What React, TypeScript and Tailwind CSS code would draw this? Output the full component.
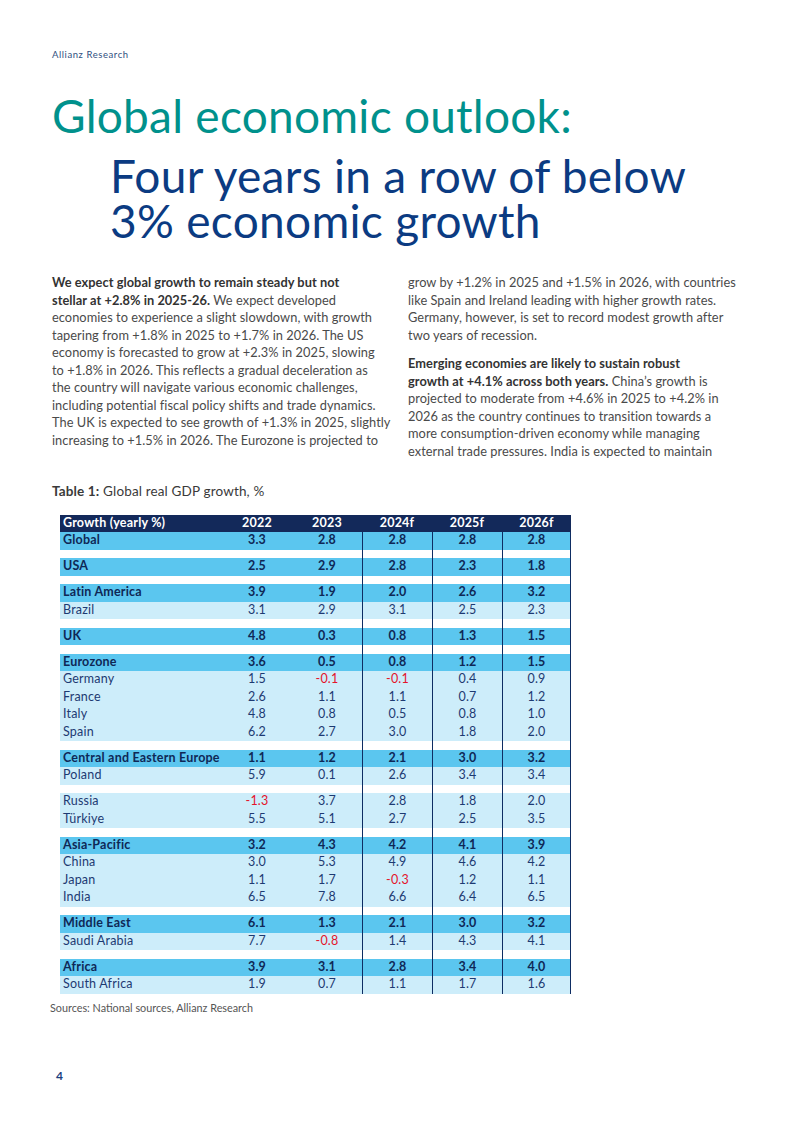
import React from "react";

type Row =
  | { kind: "gap" }
  | { kind: "bold" | "light"; label: string; v: string[] };

const rows: Row[] = [
  { kind: "bold", label: "Global", v: ["3.3", "2.8", "2.8", "2.8", "2.8"] },
  { kind: "gap" },
  { kind: "bold", label: "USA", v: ["2.5", "2.9", "2.8", "2.3", "1.8"] },
  { kind: "gap" },
  { kind: "bold", label: "Latin America", v: ["3.9", "1.9", "2.0", "2.6", "3.2"] },
  { kind: "light", label: "Brazil", v: ["3.1", "2.9", "3.1", "2.5", "2.3"] },
  { kind: "gap" },
  { kind: "bold", label: "UK", v: ["4.8", "0.3", "0.8", "1.3", "1.5"] },
  { kind: "gap" },
  { kind: "bold", label: "Eurozone", v: ["3.6", "0.5", "0.8", "1.2", "1.5"] },
  { kind: "light", label: "Germany", v: ["1.5", "-0.1", "-0.1", "0.4", "0.9"] },
  { kind: "light", label: "France", v: ["2.6", "1.1", "1.1", "0.7", "1.2"] },
  { kind: "light", label: "Italy", v: ["4.8", "0.8", "0.5", "0.8", "1.0"] },
  { kind: "light", label: "Spain", v: ["6.2", "2.7", "3.0", "1.8", "2.0"] },
  { kind: "gap" },
  { kind: "bold", label: "Central and Eastern Europe", v: ["1.1", "1.2", "2.1", "3.0", "3.2"] },
  { kind: "light", label: "Poland", v: ["5.9", "0.1", "2.6", "3.4", "3.4"] },
  { kind: "gap" },
  { kind: "light", label: "Russia", v: ["-1.3", "3.7", "2.8", "1.8", "2.0"] },
  { kind: "light", label: "Türkiye", v: ["5.5", "5.1", "2.7", "2.5", "3.5"] },
  { kind: "gap" },
  { kind: "bold", label: "Asia-Pacific", v: ["3.2", "4.3", "4.2", "4.1", "3.9"] },
  { kind: "light", label: "China", v: ["3.0", "5.3", "4.9", "4.6", "4.2"] },
  { kind: "light", label: "Japan", v: ["1.1", "1.7", "-0.3", "1.2", "1.1"] },
  { kind: "light", label: "India", v: ["6.5", "7.8", "6.6", "6.4", "6.5"] },
  { kind: "gap" },
  { kind: "bold", label: "Middle East", v: ["6.1", "1.3", "2.1", "3.0", "3.2"] },
  { kind: "light", label: "Saudi Arabia", v: ["7.7", "-0.8", "1.4", "4.3", "4.1"] },
  { kind: "gap" },
  { kind: "bold", label: "Africa", v: ["3.9", "3.1", "2.8", "3.4", "4.0"] },
  { kind: "light", label: "South Africa", v: ["1.9", "0.7", "1.1", "1.7", "1.6"] },
];

const numCell = [
  "w-[70px] text-center",
  "w-[70px] text-center",
  "w-[70px] text-center border-l-[1.5px] border-[#0e2d63]",
  "w-[70px] text-center border-l-[1.5px] border-[#0e2d63]",
  "w-[69px] text-center border-x-[1.5px] border-[#0e2d63]",
];

function TableRow({ row }: { row: Row }) {
  if (row.kind === "gap") {
    return (
      <div className="flex h-[8.5px]">
        <div className="w-[162px]" />
        {numCell.map((c, i) => (
          <div key={i} className={c} />
        ))}
      </div>
    );
  }
  const bold = row.kind === "bold";
  return (
    <div
      className={
        bold
          ? "flex h-[17.5px] items-center bg-[#5bc6ef] font-bold text-[#0f2856]"
          : "flex h-[17.5px] items-center bg-[#cdedfa] text-[#1d3a72]"
      }
    >
      <div className="w-[162px] pl-[3px] whitespace-nowrap">{row.label}</div>
      {row.v.map((v, i) => (
        <div
          key={i}
          className={`${numCell[i]} h-full flex items-center justify-center ${
            v.startsWith("-") ? "text-[#e4142b]" : ""
          }`}
        >
          {v}
        </div>
      ))}
    </div>
  );
}

export default function App() {
  return (
    <div className="w-[800px] h-[1130px] bg-white px-[52px] pt-[48px] font-['Lato',sans-serif] text-[#4a4a4a]">
      <div className="text-[9.5px] leading-[14px] tracking-[0.06em] text-[#2f4f80]">Allianz Research</div>

      <h1 className="mt-[31px] text-[46px] leading-[46px] tracking-[0.25px] text-[#00918c] whitespace-nowrap">
        Global economic outlook:
      </h1>
      <h2 className="mt-[14px] pl-[58px] text-[46px] leading-[45px] tracking-[0.3px] text-[#0b3b82] whitespace-nowrap">
        <div>Four years in a row of below</div>
        <div>3% economic growth</div>
      </h2>

      <div className="mt-[31px] grid grid-cols-2 gap-[16px] text-[12.8px] leading-[17.5px] tracking-[0.05px] whitespace-nowrap">
        <p>
          <b className="text-[#333]">We expect global growth to remain steady but not</b>
          <br />
          <b className="text-[#333]">stellar at +2.8% in 2025-26.</b> We expect developed
          <br />
          economies to experience a slight slowdown, with growth
          <br />
          tapering from +1.8% in 2025 to +1.7% in 2026. The US
          <br />
          economy is forecasted to grow at +2.3% in 2025, slowing
          <br />
          to +1.8% in 2026. This reflects a gradual deceleration as
          <br />
          the country will navigate various economic challenges,
          <br />
          including potential fiscal policy shifts and trade dynamics.
          <br />
          The UK is expected to see growth of +1.3% in 2025, slightly
          <br />
          increasing to +1.5% in 2026. The Eurozone is projected to
        </p>
        <div>
          <p>
            grow by +1.2% in 2025 and +1.5% in 2026, with countries
            <br />
            like Spain and Ireland leading with higher growth rates.
            <br />
            Germany, however, is set to record modest growth after
            <br />
            two years of recession.
          </p>
          <p className="mt-[11px]">
            <b className="text-[#333]">Emerging economies are likely to sustain robust</b>
            <br />
            <b className="text-[#333]">growth at +4.1% across both years.</b> China’s growth is
            <br />
            projected to moderate from +4.6% in 2025 to +4.2% in
            <br />
            2026 as the country continues to transition towards a
            <br />
            more consumption-driven economy while managing
            <br />
            external trade pressures. India is expected to maintain
          </p>
        </div>
      </div>

      <div className="mt-[23px] text-[13.5px] leading-[17px] tracking-[0.15px] text-[#3a3a3a]">
        <b>Table 1:</b> Global real GDP growth, %
      </div>

      <div className="mt-[15px] ml-[8px] w-[511px] text-[12.5px] tracking-[0.2px]">
        <div className="flex h-[17px] items-center bg-[#13295a] font-bold text-white">
          <div className="w-[162px] pl-[3px]">Growth (yearly %)</div>
          <div className="w-[70px] text-center">2022</div>
          <div className="w-[70px] text-center">2023</div>
          <div className="w-[70px] text-center">2024f</div>
          <div className="w-[70px] text-center">2025f</div>
          <div className="w-[69px] text-center">2026f</div>
        </div>
        {rows.map((r, i) => (
          <TableRow key={i} row={r} />
        ))}
      </div>

      <div className="mt-[7px] -ml-[2px] text-[10.8px] leading-[14px] text-[#555]">
        Sources: National sources, Allianz Research
      </div>

      <div className="mt-[53px] pl-[4px] text-[12px] font-bold leading-[16px] text-[#1c3f80]">4</div>
    </div>
  );
}
